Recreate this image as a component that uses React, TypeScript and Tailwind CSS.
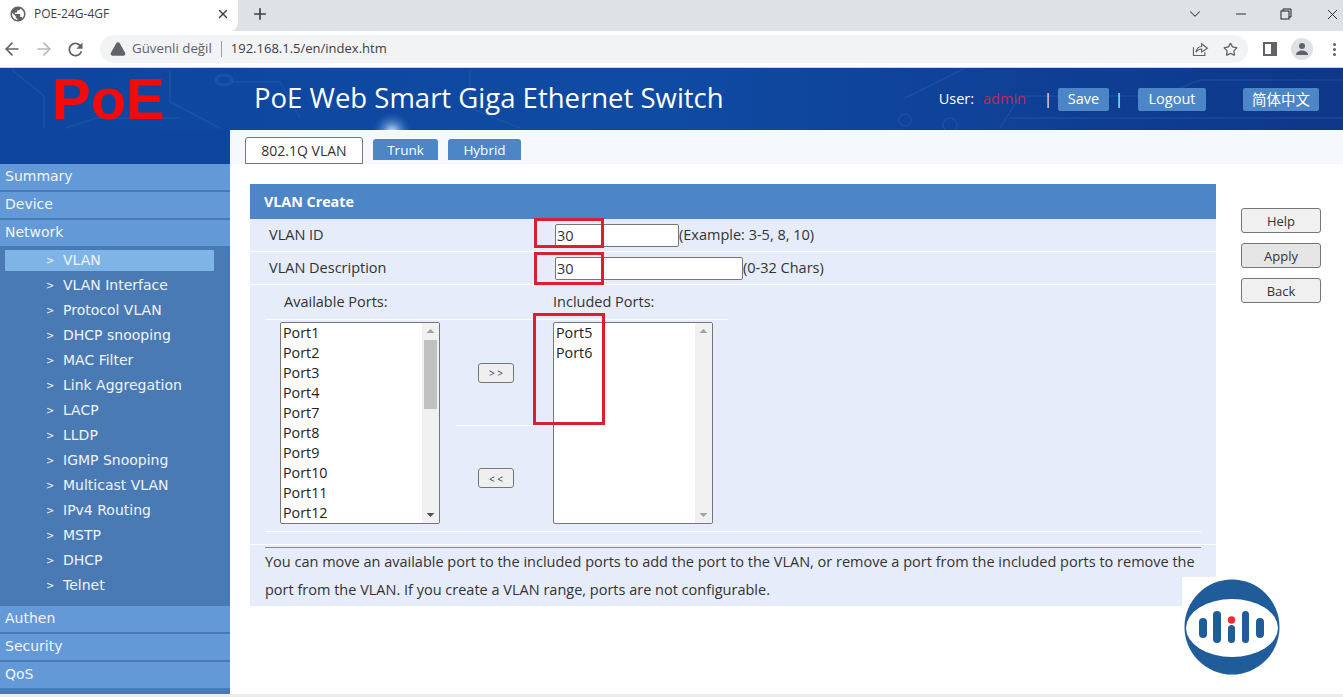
import React from "react";
import { ArrowLeft, ArrowRight, TriangleAlert, Star, X, Plus, ChevronDown, Minus } from "lucide-react";

const ui = "font-['Open_Sans','Noto_Sans',sans-serif]";
const sub = ["VLAN", "VLAN Interface", "Protocol VLAN", "DHCP snooping", "MAC Filter", "Link Aggregation", "LACP", "LLDP", "IGMP Snooping", "Multicast VLAN", "IPv4 Routing", "MSTP", "DHCP", "Telnet"];
const ports = ["Port1", "Port2", "Port3", "Port4", "Port7", "Port8", "Port9", "Port10", "Port11", "Port12"];

function Top({ label }: { label: string }) {
  return (
    <div className="h-[28px] shrink-0 border-b-2 border-[#4a7ab3] bg-[#6399d6] pl-[5px] text-[14px] leading-[24px] text-[#f0f5fb]">
      {label}
    </div>
  );
}

function ListBox({ items, thumb, className }: { items: string[]; thumb?: boolean; className: string }) {
  return (
    <div className={"flex h-[202px] w-[160px] overflow-hidden rounded-[2px] border border-[#767676] bg-white " + className}>
      <div className="flex-1 overflow-hidden pl-[2px] text-[14.3px] leading-[20px] text-[#222]">
        {items.map((p) => (
          <div key={p}>{p}</div>
        ))}
      </div>
      <div className="flex w-[17px] flex-col items-center bg-[#f1f1f1]">
        <svg width="17" height="17" viewBox="0 0 17 17" className="shrink-0"><path d="M4.500 10 L8.500 6 L12.500 10Z" fill="#a3a3a3" /></svg>
        <div className="w-full flex-1">{thumb && <div className="ml-[2px] h-[69px] w-[13px] bg-[#c1c1c1]" />}</div>
        <svg width="17" height="17" viewBox="0 0 17 17" className="shrink-0"><path d="M4.500 7 L8.500 11 L12.500 7Z" fill={thumb ? "#505050" : "#a3a3a3"} /></svg>
      </div>
    </div>
  );
}

function SideBtn({ label, dark }: { label: string; dark?: boolean }) {
  return (
    <button className={"h-[25px] w-[80px] rounded-[3px] border border-[#767676] pt-[2px] text-[13px] leading-none text-[#333] " + (dark ? "bg-[#e6e6e6]" : "bg-[#f0f0f0]")}>
      {label}
    </button>
  );
}

function MoveBtn({ label }: { label: string }) {
  return (
    <button className="h-[20px] w-[36px] rounded-[3px] border border-[#767676] bg-[#efefef] pt-[1px] text-[10px] leading-none text-[#1f3f77]">
      {label}
    </button>
  );
}

function Logo() {
  return (
    <svg width="100" height="100" viewBox="0 0 100 100" className="absolute left-[1182px] top-[577px]">
      <rect width="100" height="100" fill="#fff" />
      <circle cx="50" cy="50" r="47.5" fill="#1f5c99" />
      <ellipse cx="50" cy="51" rx="46" ry="29" fill="#fff" />
      <g fill="#1f5c99">
        <rect x="17" y="41" width="8" height="20" rx="4" />
        <rect x="31" y="34" width="8" height="32" rx="4" />
        <rect x="46" y="48" width="7" height="18" rx="3.500" />
        <rect x="60" y="34" width="7" height="32" rx="3.500" />
        <rect x="74" y="41" width="8" height="20" rx="4" />
      </g>
      <circle cx="49.500" cy="43" r="3.700" fill="#e53030" />
    </svg>
  );
}

function Circuit() {
  return (
    <svg className="absolute inset-0 h-full w-full" viewBox="0 0 1343 62" fill="none">
      <defs>
        <radialGradient id="glow" cx="50%" cy="50%" r="50%">
          <stop offset="0%" stopColor="#e8f2ff" stopOpacity="0.95" />
          <stop offset="45%" stopColor="#9cc3f0" stopOpacity="0.45" />
          <stop offset="100%" stopColor="#2f68b8" stopOpacity="0" />
        </radialGradient>
      </defs>
      <g stroke="#3f74bd" strokeOpacity="0.25" strokeWidth="1.500">
        <path d="M12 2 L44 28 L44 60" />
        <path d="M66 60 L96 50 L180 50" />
        <path d="M170 2 L170 34 L220 60" />
        <path d="M232 14 L280 14 L300 50" />
        <path d="M470 2 L470 40 L520 60" />
        <path d="M905 30 L965 0" />
        <path d="M1000 60 L1020 28 L1160 28 L1200 12 L1343 12" />
        <path d="M1010 50 L1343 50" />
        <ellipse cx="224" cy="12" rx="8" ry="5" strokeWidth="3" />
        <circle cx="905" cy="52" r="6" />
        <circle cx="950" cy="57" r="7" />
      </g>
      <circle cx="392" cy="64" r="20" fill="url(#glow)" />
    </svg>
  );
}

export default function App() {
  return (
    <div className={"relative flex h-[697px] w-[1343px] flex-col overflow-hidden bg-white " + ui}>
      {/* Tab strip */}
      <div className="flex h-[31px] shrink-0 items-center bg-[#dee1e6]">
        <div className="flex h-full w-[238px] items-center rounded-br-lg bg-white pb-[3px] pl-[9px] pr-[8px]">
          <svg width="18" height="18" viewBox="0 0 24 24" fill="#5f6368"><path d="M12 2C6.480 2 2 6.480 2 12s4.480 10 10 10 10-4.480 10-10S17.520 2 12 2zm-1 17.930c-3.950-.490-7-3.850-7-7.930 0-.620.080-1.210.210-1.790L9 15v1c0 1.100.900 2 2 2v1.930zm6.900-2.540c-.260-.810-1-1.390-1.900-1.390h-1v-3c0-.550-.450-1-1-1H8v-2h2c.550 0 1-.450 1-1V7h2c1.100 0 2-.900 2-2v-.410c2.930 1.190 5 4.060 5 7.410 0 2.080-.800 3.970-2.100 5.390z" /></svg>
          <span className="ml-[7px] flex-1 text-[12px] text-[#3c4043]">POE-24G-4GF</span>
          <X size={14} strokeWidth={2.4} className="text-[#3c4043]" />
        </div>
        <Plus size={18} strokeWidth={2.2} className="mb-[3px] ml-[13px] text-[#3c4043]" />
        <div className="mb-[3px] ml-auto flex items-center pr-[2px]">
          <ChevronDown size={18} strokeWidth={1.4} className="mr-[29px] text-[#3c4043]" />
          <Minus size={16} strokeWidth={1.4} className="mr-[31px] text-[#222]" />
          <svg width="12" height="12" viewBox="0 0 12 12" fill="none" stroke="#222" className="mr-[32px]"><rect x="1" y="3" width="8" height="8" /><path d="M3 3 V1 H11 V9 H9" /></svg>
          <X size={17} strokeWidth={1.3} className="text-[#222]" />
        </div>
      </div>
      {/* Toolbar */}
      <div className="flex h-[36px] shrink-0 items-center bg-white">
        <ArrowLeft size={20} strokeWidth={2} className="ml-[2px] text-[#5f6368]" />
        <ArrowRight size={20} strokeWidth={2} className="ml-[12px] text-[#b4b7bb]" />
        <svg width="21" height="21" viewBox="0 0 24 24" fill="#5f6368" className="ml-[11px]"><path d="M17.650 6.350A7.958 7.958 0 0 0 12 4c-4.420 0-7.990 3.580-7.990 8s3.570 8 7.990 8c3.730 0 6.840-2.550 7.730-6h-2.080A5.990 5.990 0 0 1 12 18c-3.310 0-6-2.690-6-6s2.690-6 6-6c1.660 0 3.140.690 4.220 1.780L13 11h7V4l-2.350 2.350z" /></svg>
        <div className="ml-[14px] flex h-[28px] w-[1148px] shrink-0 items-center rounded-full bg-[#f1f3f4] pl-[10px]">
          <TriangleAlert size={16} fill="#5f6368" stroke="#5f6368" className="text-white" />
          <span className="ml-[6px] text-[13.300px] text-[#5f6368]">Güvenli değil</span>
          <span className="mx-[9px] h-[16px] w-px bg-[#9aa0a6]" />
          <span className="text-[13px] text-[#3c4043]">192.168.1.5/en/index.htm</span>
          <span className="ml-auto flex items-center pr-[10px]">
            <svg width="18" height="18" viewBox="0 0 22 22" fill="none" stroke="#5f6368" strokeWidth="1.400" className="mr-[14px]"><path d="M3 9 V19 H17 V15" /><path d="M6 15 C7 10 10 8 13 8 V4.500 L20 10 L13 14.500 V11 C10 11 8 12 6 15Z" /></svg>
            <Star size={15} strokeWidth={2} className="text-[#5f6368]" />
          </span>
        </div>
        <span className="ml-[15px] h-[14px] w-[14px] border-[2px] border-r-[6px] border-[#5f6368] bg-white" />
        <span className="ml-[14px] flex h-[22px] w-[22px] items-center justify-center rounded-full bg-[#dee1e6]">
          <svg width="14" height="14" viewBox="0 0 14 14" fill="#5f6368"><circle cx="7" cy="4" r="3" /><path d="M1 13c0-3 3-4.500 6-4.500s6 1.500 6 4.500Z" /></svg>
        </span>
        <span className="ml-[20px] flex flex-col gap-[2px]">
          <i className="block h-[3px] w-[3px] rounded-full bg-[#5f6368]" />
          <i className="block h-[3px] w-[3px] rounded-full bg-[#5f6368]" />
          <i className="block h-[3px] w-[3px] rounded-full bg-[#5f6368]" />
        </span>
      </div>
      <div className="h-px shrink-0 bg-[#c9d3e2]" />
      {/* App header */}
      <div className="relative flex h-[62px] shrink-0 items-center bg-gradient-to-r from-[#0e469f] via-[#0f4aa3] to-[#0e3789]">
        <Circuit />
        <span className="relative ml-[52px] w-[202px] font-['Liberation_Sans',sans-serif] text-[58px] font-bold leading-none text-[#f50a0a]">PoE</span>
        <span className="relative -mt-[2px] text-[27.500px] text-white">PoE Web Smart Giga Ethernet Switch</span>
        <div className="relative ml-auto flex items-center pr-[24px] text-[14.500px] text-white">
          <span>User:</span>
          <span className="ml-[9px] w-[61px] text-[#c2255c]">admin</span>
          <span>|</span>
          <span className="ml-[6px] flex h-[23px] w-[51px] items-center justify-center rounded-[2px] bg-[#4d86c6]">Save</span>
          <span className="ml-[6px]">|</span>
          <span className="ml-[15px] flex h-[23px] w-[68px] items-center justify-center rounded-[2px] bg-[#4d86c6]">Logout</span>
          <span className="ml-[37px] flex h-[23px] w-[76px] items-center justify-center rounded-[2px] bg-[#4d86c6] font-['Noto_Sans_CJK_SC',sans-serif]">简体中文</span>
        </div>
      </div>
      <div className="flex min-h-0 flex-1">
        {/* Sidebar */}
        <div className="flex w-[230px] shrink-0 flex-col bg-[#4a7ab3] font-['DejaVu_Sans',sans-serif]">
          <div className="h-[34px] shrink-0 bg-[#0e469f]" />
          <Top label="Summary" />
          <Top label="Device" />
          <Top label="Network" />
          <div className="flex h-[358px] shrink-0 flex-col pt-[2px] text-[14px] text-[#eef4fb]">
            {sub.map((s, i) => (
              <div key={s} className="h-[25px] shrink-0">
                <div className={"mx-[5px] flex h-[21px] w-[209px] items-center " + (i === 0 ? "bg-[#7fb5e6]" : "")}>
                  <span className="ml-[41px] w-[17px] text-[10px]">&gt;</span>
                  <span>{s}</span>
                </div>
              </div>
            ))}
          </div>
          <Top label="Authen" />
          <Top label="Security" />
          <Top label="QoS" />
        </div>
        {/* Content */}
        <div className="flex min-w-0 flex-1 flex-col">
          <div className="flex h-[34px] shrink-0 items-end overflow-hidden bg-[#f5f9fd] pl-[15px]">
            <div className="flex h-[27px] w-[118px] items-center justify-center rounded-t-[3px] border border-[#767676] bg-white text-[14px] text-[#333]">802.1Q VLAN</div>
            <div className="mb-[4px] ml-[10px] flex h-[21px] w-[65px] items-center justify-center rounded-t-[3px] bg-[#4d86c6] pt-[1px] text-[13.500px] text-white">Trunk</div>
            <div className="mb-[4px] ml-[10px] flex h-[21px] w-[73px] items-center justify-center rounded-t-[3px] bg-[#4d86c6] pt-[1px] text-[13.500px] text-white">Hybrid</div>
          </div>
          <div className="flex items-start pl-[20px] pt-[20px]">
            {/* Panel */}
            <div className="w-[966px] bg-[#e6ecfa] text-[#333]">
              <div className="flex h-[35px] items-center bg-[#4d86c6] pl-[14px] text-[14.300px] font-bold text-white">VLAN Create</div>
              <div className="flex h-[33px] items-center border-b border-white text-[14.500px]">
                <span className="ml-[19px] w-[286px]">VLAN ID</span>
                <span className="h-[23px] w-[124px] rounded-[2px] border border-[#767676] bg-white pl-[1px] leading-[22px]">30</span>
                <span>(Example: 3-5, 8, 10)</span>
              </div>
              <div className="flex h-[33px] items-center border-b border-white text-[14.500px]">
                <span className="ml-[19px] w-[286px]">VLAN Description</span>
                <span className="h-[23px] w-[188px] rounded-[2px] border border-[#767676] bg-white pl-[1px] leading-[22px]">30</span>
                <span>(0-32 Chars)</span>
              </div>
              <div className="ml-[15px] flex h-[35px] w-[463px] items-center border-b border-white text-[14.500px]">
                <span className="ml-[19px] w-[269px]">Available Ports:</span>
                <span>Included Ports:</span>
              </div>
              <div className="mx-[15px] flex h-[212px] border-b border-white">
                <ListBox items={ports} thumb className="ml-[15px] mt-[2px]" />
                <div className="ml-[16px] flex w-[97px] flex-col">
                  <div className="flex h-[106px] items-center border-b border-white pl-[22px]"><MoveBtn label="> >" /></div>
                  <div className="flex flex-1 items-center pb-[1px] pl-[22px]"><MoveBtn label="< <" /></div>
                </div>
                <ListBox items={["Port5", "Port6"]} className="mt-[2px]" />
              </div>
              <div className="mt-[12px] border-t border-white pt-[2px]">
                <div className="mx-[15px] border-t border-[#8a8a8a] pb-[2px] text-[14.500px] leading-[28px]">
                  You can move an available port to the included ports to add the port to the VLAN, or remove a port from the included ports to remove the port from the VLAN. If you create a VLAN range, ports are not configurable.
                </div>
              </div>
            </div>
            {/* Action buttons */}
            <div className="ml-[25px] mt-[24px] flex flex-col gap-[10px]">
              <SideBtn label="Help" />
              <SideBtn label="Apply" dark />
              <SideBtn label="Back" />
            </div>
          </div>
        </div>
      </div>
      <div className="h-[3px] shrink-0 bg-[#ececec]" />

      {/* Annotation overlays */}
      <div className="absolute left-[534px] top-[218px] h-[30px] w-[70px] border-[3px] border-[#dc1f2e]" />
      <div className="absolute left-[534px] top-[252px] h-[33px] w-[70px] border-[3px] border-[#dc1f2e]" />
      <div className="absolute left-[533px] top-[313px] h-[112px] w-[72px] border-[3px] border-[#dc1f2e]" />
      <Logo />
    </div>
  );
}
